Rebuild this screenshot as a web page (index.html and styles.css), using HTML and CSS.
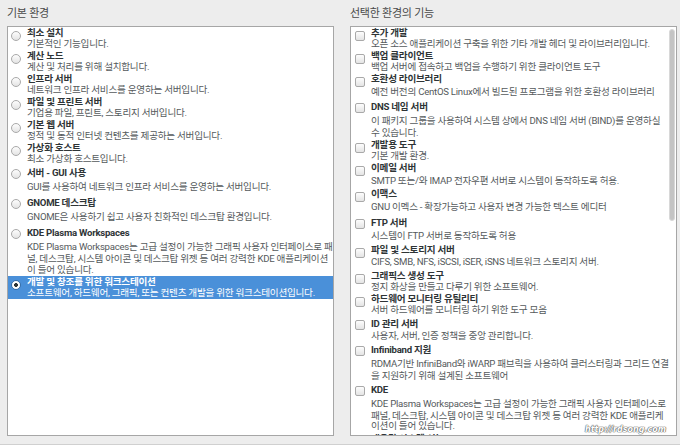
FILE: index.html
```html
<!DOCTYPE html>
<html lang="ko">
<head>
<meta charset="utf-8">
<title>기본 환경</title>
<link rel="stylesheet" href="styles.css">
</head>
<body>
<div class="page">
  <section class="col">
    <h2 class="heading">기본 환경</h2>
    <div class="box">
      <ul class="list">
        <li class="item"><span class="radio"></span><div class="text"><div class="t">최소 설치</div><div class="d">기본적인 기능입니다.</div></div></li>
        <li class="item"><span class="radio"></span><div class="text"><div class="t">계산 노드</div><div class="d">계산 및 처리를 위해 설치합니다.</div></div></li>
        <li class="item"><span class="radio"></span><div class="text"><div class="t">인프라 서버</div><div class="d">네트워크 인프라 서비스를 운영하는 서버입니다.</div></div></li>
        <li class="item"><span class="radio"></span><div class="text"><div class="t">파일 및 프린트 서버</div><div class="d">기업용 파일, 프린트, 스토리지 서버입니다.</div></div></li>
        <li class="item"><span class="radio"></span><div class="text"><div class="t">기본 웹 서버</div><div class="d">정적 및 동적 인터넷 컨텐츠를 제공하는 서버입니다.</div></div></li>
        <li class="item"><span class="radio"></span><div class="text"><div class="t">가상화 호스트</div><div class="d">최소 가상화 호스트입니다.</div></div></li>
        <li class="item"><span class="radio"></span><div class="text"><div class="t w">서버 - GUI 사용</div><div class="d w">GUI를 사용하여 네트워크 인프라 서비스를 운영하는 서버입니다.</div></div></li>
        <li class="item"><span class="radio"></span><div class="text"><div class="t w">GNOME 데스크탑</div><div class="d w">GNOME은 사용하기 쉽고 사용자 친화적인 데스크탑 환경입니다.</div></div></li>
        <li class="item"><span class="radio"></span><div class="text"><div class="t w">KDE Plasma Workspaces</div><div class="d"><span class="ln w">KDE Plasma Workspaces는 고급 설정이 가능한 그래픽 사용자 인터페이스로 패</span><span class="ln">널, 데스크탑, 시스템 아이콘 및 데스크탑 위젯 등 여러 강력한 KDE 애플리케이션</span><span class="ln">이 들어 있습니다.</span></div></div></li>
        <li class="item sel"><span class="radio on"></span><div class="text"><div class="t">개발 및 창조를 위한 워크스테이션</div><div class="d">소프트웨어, 하드웨어, 그래픽, 또는 컨텐츠 개발을 위한 워크스테이션입니다.</div></div></li>
      </ul>
    </div>
  </section>
  <section class="col">
    <h2 class="heading">선택한 환경의 기능</h2>
    <div class="box box-r">
      <ul class="list">
        <li class="item"><span class="check"></span><div class="text"><div class="t">추가 개발</div><div class="d">오픈 소스 애플리케이션 구축을 위한 기타 개발 헤더 및 라이브러리입니다.</div></div></li>
        <li class="item"><span class="check"></span><div class="text"><div class="t">백업 클라이언트</div><div class="d">백업 서버에 접속하고 백업을 수행하기 위한 클라이언트 도구</div></div></li>
        <li class="item"><span class="check"></span><div class="text"><div class="t">호환성 라이브러리</div><div class="d w">예전 버전의 CentOS Linux에서 빌드된 프로그램을 위한 호환성 라이브러리</div></div></li>
        <li class="item"><span class="check"></span><div class="text"><div class="t w">DNS 네임 서버</div><div class="d"><span class="ln w">이 패키지 그룹을 사용하여 시스템 상에서 DNS 네임 서버 (BIND)를 운영하실</span><span class="ln">수 있습니다.</span></div></div></li>
        <li class="item"><span class="check"></span><div class="text"><div class="t">개발용 도구</div><div class="d">기본 개발 환경.</div></div></li>
        <li class="item"><span class="check"></span><div class="text"><div class="t">이메일 서버</div><div class="d w">SMTP 또는/와 IMAP 전자우편 서버로 시스템이 동작하도록 허용.</div></div></li>
        <li class="item"><span class="check"></span><div class="text"><div class="t">이맥스</div><div class="d w">GNU 이멕스 - 확장가능하고 사용자 변경 가능한 텍스트 에디터</div></div></li>
        <li class="item"><span class="check"></span><div class="text"><div class="t w">FTP 서버</div><div class="d w">시스템이 FTP 서버로 동작하도록 허용</div></div></li>
        <li class="item"><span class="check"></span><div class="text"><div class="t">파일 및 스토리지 서버</div><div class="d w">CIFS, SMB, NFS, iSCSI, iSER, iSNS 네트워크 스토리지 서버.</div></div></li>
        <li class="item"><span class="check"></span><div class="text"><div class="t">그래픽스 생성 도구</div><div class="d">정지 화상을 만들고 다루기 위한 소프트웨어.</div></div></li>
        <li class="item"><span class="check"></span><div class="text"><div class="t">하드웨어 모니터링 유틸리티</div><div class="d">서버 하드웨어를 모니터링 하기 위한 도구 모음</div></div></li>
        <li class="item"><span class="check"></span><div class="text"><div class="t w">ID 관리 서버</div><div class="d">사용자, 서버, 인증 정책을 중앙 관리합니다.</div></div></li>
        <li class="item"><span class="check"></span><div class="text"><div class="t w">Infiniband 지원</div><div class="d"><span class="ln w">RDMA기반 InfiniBand와 iWARP 패브릭을 사용하여 클러스터링과 그리드 연결</span><span class="ln">을 지원하기 위해 설계된 소프트웨어</span></div></div></li>
        <li class="item"><span class="check"></span><div class="text"><div class="t w">KDE</div><div class="d"><span class="ln w">KDE Plasma Workspaces는 고급 설정이 가능한 그래픽 사용자 인터페이스로</span><span class="ln">패널, 데스크탑, 시스템 아이콘 및 데스크탑 위젯 등 여러 강력한 KDE 애플리케</span><span class="ln">이션이 들어 있습니다.</span></div></div></li>
        <li class="item"><span class="check"></span><div class="text"><div class="t">대용량 시스템 성능</div><div class="d">고성능 시스템을 위한 도구입니다.</div></div></li>
      </ul>
      <div class="scroll"><div class="thumb"></div></div>
    </div>
  </section>
  <div class="watermark">http://rdsong.com</div>
</div>
</body>
</html>
```
FILE: styles.css
```css
* {
  box-sizing: border-box;
  margin: 0;
  padding: 0;
}

html, body {
  width: 680px;
  height: 445px;
  overflow: hidden;
}

body {
  background: #ededed;
  font-family: Roboto, "Noto Sans CJK KR", sans-serif;
  font-size: 9.6px;
  letter-spacing: -0.25px;
  color: #2e3436;
}

.page {
  position: relative;
  height: 445px;
  display: grid;
  grid-template-columns: 327px 327px;
  column-gap: 16px;
  padding: 6px 0 0 7px;
  border-bottom: 1px solid #d0d0d0;
}

.heading {
  font-size: 11px;
  font-weight: normal;
  line-height: 16px;
  margin-bottom: 4px;
  color: #4a4a4a;
}

.box {
  height: 410px;
  border: 1px solid #a6a6a6;
  background: #fff;
  overflow: hidden;
}

.box-r {
  display: flex;
}

.list {
  list-style: none;
  flex: 1;
  min-width: 0;
}

.item {
  display: flex;
  align-items: flex-start;
  padding: 1px 0 1px 3px;
}

.box-r .item {
  padding-left: 4px;
}

.radio,
.check {
  flex: none;
  width: 10px;
  height: 10px;
  margin-top: 3px;
  border: 1px solid #a9a9a9;
  background: linear-gradient(#fdfdfd, #e4e4e4);
}

.radio {
  border-radius: 50%;
}

.check {
  border-radius: 2px;
}

.radio.on {
  border-color: #3a6fa8;
  background: radial-gradient(circle, #2e3436 0 1.6px, #ffffff 2.2px);
}

.text {
  margin-left: 6px;
  white-space: nowrap;
}

.t {
  font-weight: bold;
  line-height: 10.5px;
  color: #2e3436;
}

.d {
  line-height: 10.5px;
  color: #555a5c;
}

.ln {
  display: block;
}

.w {
  line-height: 14px;
}

.box-r .w {
  line-height: 13.7px;
}

.item.sel {
  background: #4a90d9;
}

.item.sel .t,
.item.sel .d {
  color: #ffffff;
}

.scroll {
  flex: none;
  width: 8px;
  padding: 2px 1px 0 1px;
}

.thumb {
  height: 192px;
  border-radius: 3px;
  background: #c4c4c4;
  border: 1px solid #d8d8d8;
}

.watermark {
  position: absolute;
  left: 585px;
  top: 425px;
  font-family: "DejaVu Sans", sans-serif;
  font-size: 8px;
  font-weight: bold;
  font-style: italic;
  letter-spacing: 0;
  color: #ffffff;
  text-shadow: 0 0 1px #555, 0 0 1px #555, 0 0 1px #555;
}
```
